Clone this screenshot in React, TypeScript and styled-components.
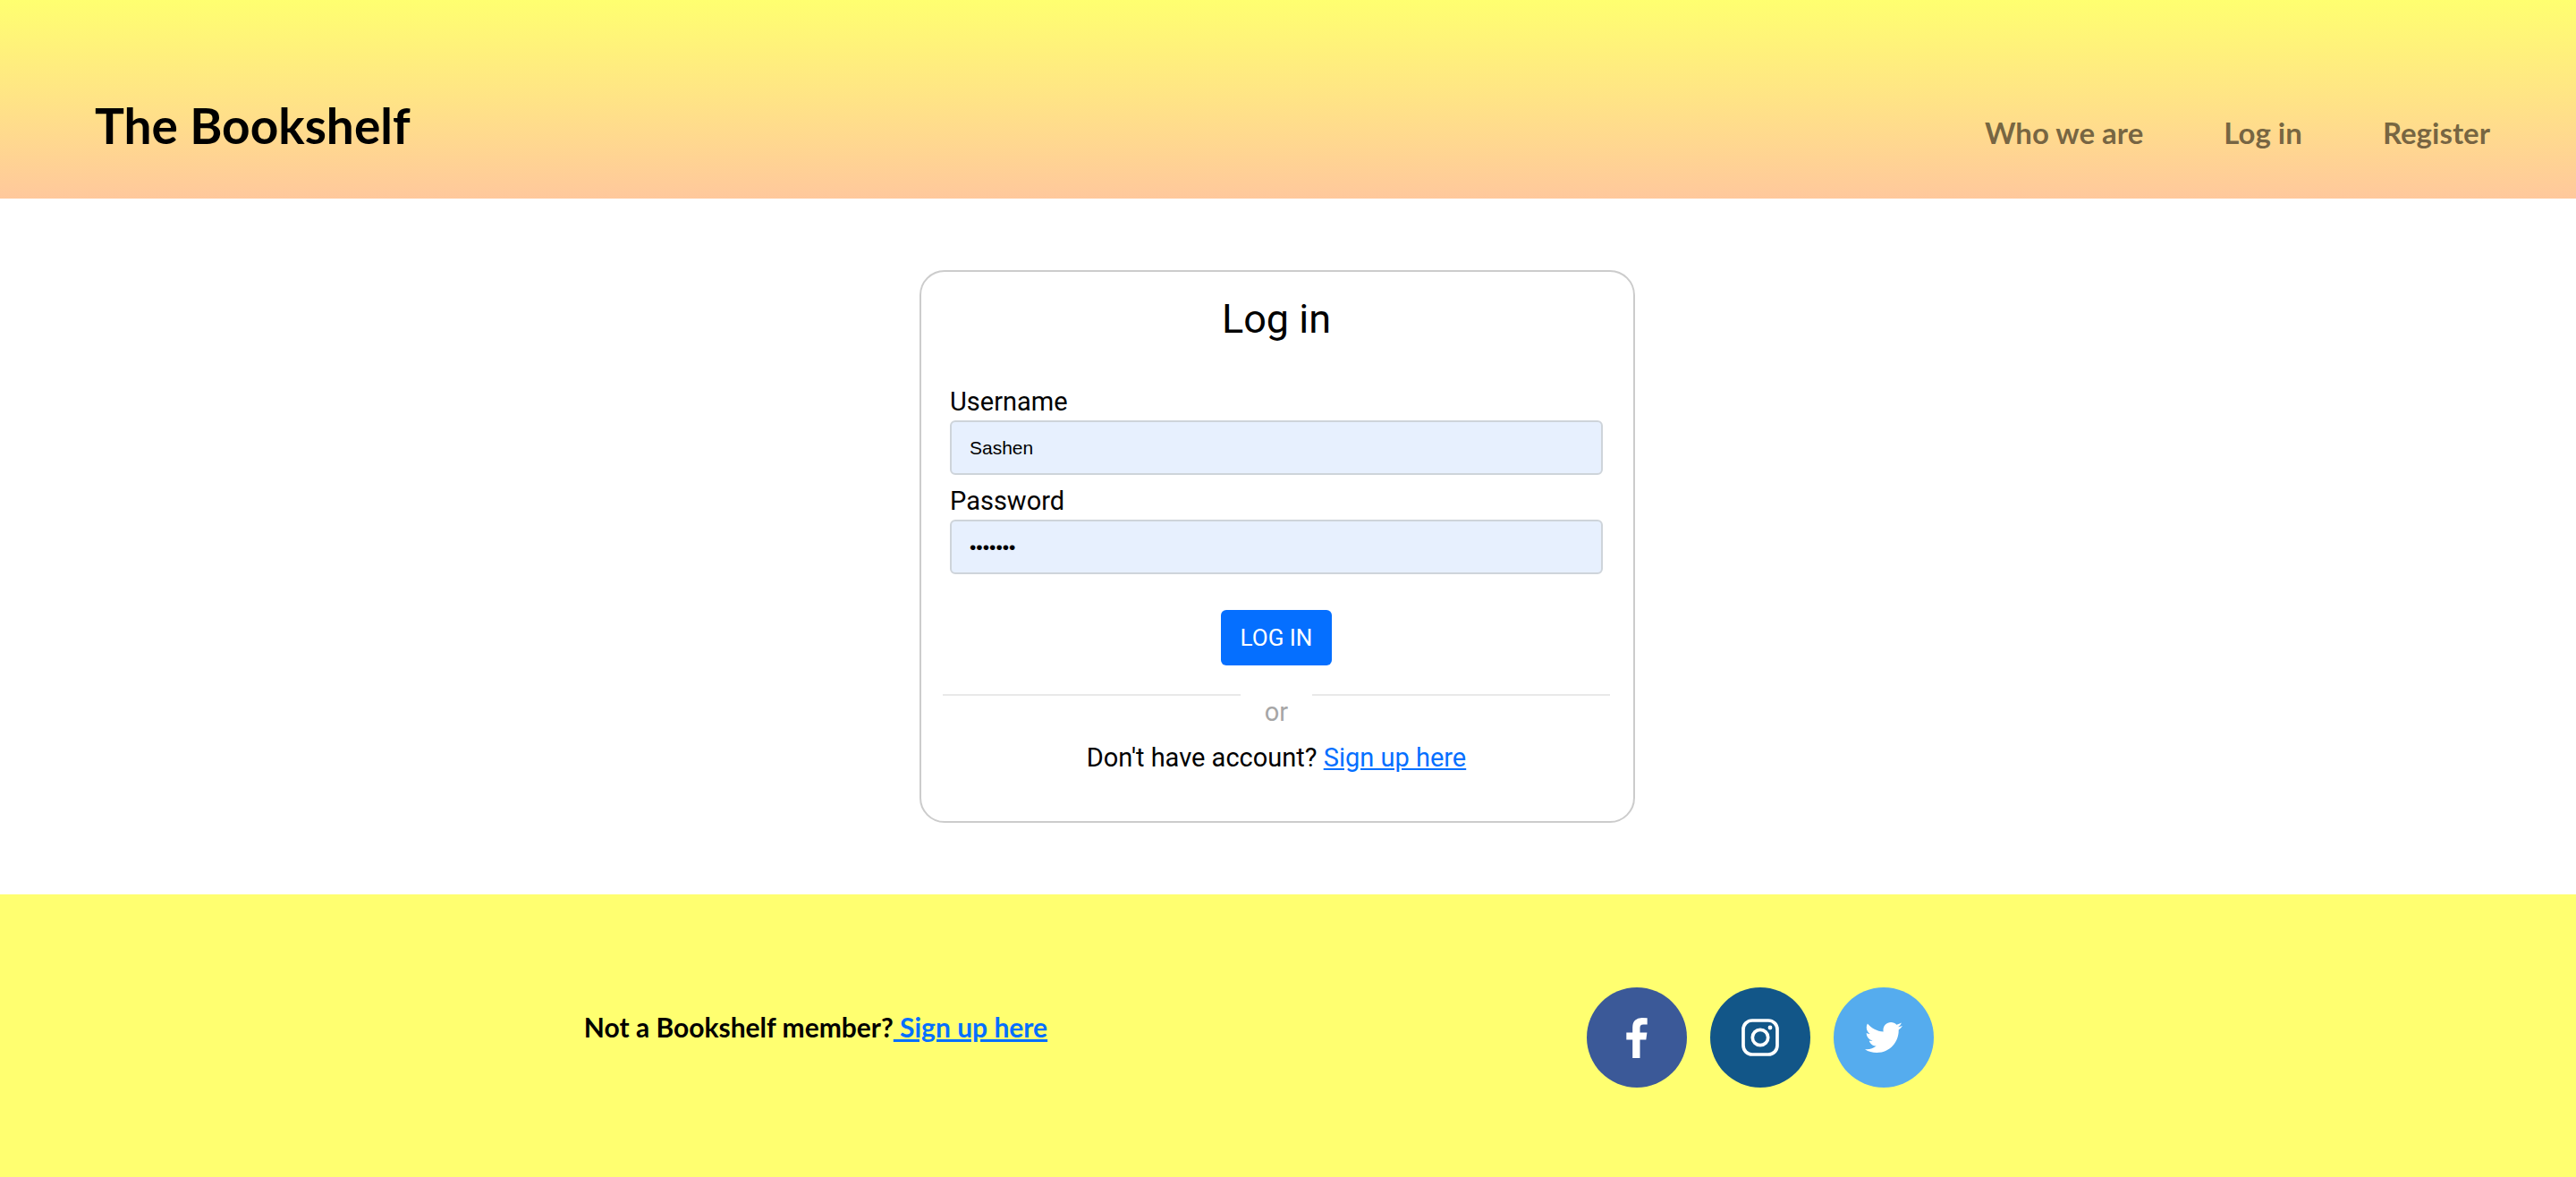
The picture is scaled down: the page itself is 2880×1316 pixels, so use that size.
import React from "react";
import styled, { createGlobalStyle } from "styled-components";
import { FaTwitter } from "react-icons/fa";

const display = `Lato, "Open Sans", sans-serif`;
const body = `Roboto, "Liberation Sans", sans-serif`;

const GlobalStyle = createGlobalStyle`
  *, *::before, *::after { box-sizing: border-box; }
  body { margin: 0; background: #fff; color: #000; font-family: ${body}; }
`;

const Page = styled.div`
  min-height: 100vh;
  display: flex;
  flex-direction: column;
`;

const Header = styled.header`
  display: flex;
  justify-content: space-between;
  align-items: baseline;
  padding: 102px 96px 44px 106px;
  background: linear-gradient(#ffff70, #ffc89c);
  font-family: ${display};
  font-weight: 700;
`;

const Brand = styled.a`
  color: #000;
  font-size: 55px;
  line-height: 76px;
  text-decoration: none;
`;

const Nav = styled.nav`
  display: flex;
  gap: 90px;
`;

const NavLink = styled.a`
  color: rgba(0, 0, 0, 0.55);
  font-size: 33px;
  line-height: 44px;
  text-decoration: none;
`;

const Main = styled.main`
  display: flex;
  justify-content: center;
  padding: 80px 24px 80px 0;
`;

const Card = styled.section`
  width: 800px;
  border: 2px solid #ccc;
  border-radius: 28px;
  padding: 24px 26px 24px 24px;
`;

const Title = styled.h1`
  margin: 0;
  font-size: 45px;
  font-weight: 400;
  line-height: 58px;
  text-align: center;
`;

const Form = styled.form`
  display: flex;
  flex-direction: column;
  padding: 42px 8px 0;
`;

const Label = styled.label`
  font-size: 29px;
  line-height: 42px;
`;

const Input = styled.input`
  height: 61px;
  margin-bottom: 8px;
  padding: 0 20px;
  border: 2px solid #ced4da;
  border-radius: 6px;
  background: #e7f0fe;
  color: #000;
  font-family: "Liberation Sans", Arial, sans-serif;
  font-size: 21px;
`;

const Submit = styled.button`
  align-self: center;
  height: 62px;
  margin-top: 32px;
  padding: 0 22px;
  border: 0;
  border-radius: 6px;
  background: #056fff;
  color: #fff;
  font-family: ${body};
  font-size: 26px;
  font-weight: 400;
`;

const Divider = styled.div`
  display: flex;
  justify-content: space-between;
  margin-top: 32px;
  color: #a6a6a6;
  font-size: 29px;
  line-height: 40px;
  text-align: center;
  &::before, &::after {
    content: "";
    flex: 1;
    height: 2px;
    background: #e9e9e9;
  }
`;

const DividerText = styled.span`
  width: 80px;
`;

const Prompt = styled.p`
  margin: 0;
  padding: 8px 0 24px;
  font-size: 29px;
  line-height: 46px;
  text-align: center;
`;

const TextLink = styled.a`
  color: #056fff;
  text-decoration: underline;
`;

const Footer = styled.footer`
  flex: 1;
  display: grid;
  grid-template-columns: 1fr 1fr;
  justify-items: center;
  align-items: start;
  padding: 104px 384px 100px;
  background: #ffff70;
`;

const Member = styled.p`
  margin: 0;
  padding-top: 24px;
  font-family: ${display};
  font-size: 30px;
  font-weight: 700;
  line-height: 40px;
`;

const Socials = styled.div`
  display: flex;
  gap: 26px;
`;

const Social = styled.a<{ $color: string }>`
  display: flex;
  align-items: center;
  justify-content: center;
  width: 112px;
  height: 112px;
  border-radius: 50%;
  background: ${(p) => p.$color};
  color: #fff;
`;

function FacebookIcon() {
  return (
    <svg width="24" height="45" viewBox="95 0 864 1664" fill="currentColor">
      <path d="M959 12v264h-157q-86 0-116 36t-30 108v189h293l-39 296h-254v759h-306v-759h-255v-296h255v-218q0-186 104-288.500t277-102.500q147 0 228 12z" />
    </svg>
  );
}

function InstagramIcon() {
  return (
    <svg width="42" height="42" viewBox="0 0 42 42" fill="none" stroke="currentColor" strokeWidth="3.700">
      <rect x="2" y="2" width="38" height="38" rx="10" />
      <circle cx="21" cy="21" r="8.700" />
      <circle cx="32" cy="10" r="2.400" fill="currentColor" stroke="none" />
    </svg>
  );
}

export default function App() {
  return (
    <Page>
      <GlobalStyle />
      <Header>
        <Brand href="#">The Bookshelf</Brand>
        <Nav>
          <NavLink href="#about">Who we are</NavLink>
          <NavLink href="#login">Log in</NavLink>
          <NavLink href="#register">Register</NavLink>
        </Nav>
      </Header>
      <Main>
        <Card>
          <Title>Log in</Title>
          <Form onSubmit={(e) => e.preventDefault()}>
            <Label htmlFor="username">Username</Label>
            <Input id="username" type="text" defaultValue="Sashen" />
            <Label htmlFor="password">Password</Label>
            <Input id="password" type="password" defaultValue="bookish" />
            <Submit type="submit">LOG IN</Submit>
          </Form>
          <Divider>
            <DividerText>or</DividerText>
          </Divider>
          <Prompt>
            Don't have account? <TextLink href="#register">Sign up here</TextLink>
          </Prompt>
        </Card>
      </Main>
      <Footer>
        <Member>
          Not a Bookshelf member?<TextLink href="#register"> Sign up here</TextLink>
        </Member>
        <Socials>
          <Social href="#facebook" aria-label="Facebook" $color="#3b5998">
            <FacebookIcon />
          </Social>
          <Social href="#instagram" aria-label="Instagram" $color="#125688">
            <InstagramIcon />
          </Social>
          <Social href="#twitter" aria-label="Twitter" $color="#55acee">
            <FaTwitter size={42} />
          </Social>
        </Socials>
      </Footer>
    </Page>
  );
}
